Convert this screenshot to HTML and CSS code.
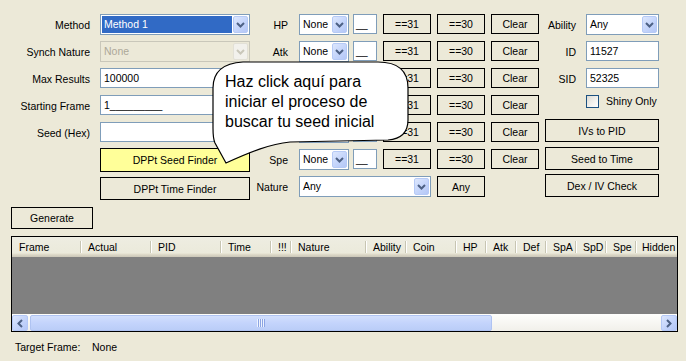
FILE: index.html
```html
<!DOCTYPE html>
<html lang="es">
<head>
<meta charset="utf-8">
<title>RNG Reporter</title>
<link rel="stylesheet" href="styles.css">
</head>
<body>
<div class="top">
  <div class="col col-left">
    <div class="row"><span class="lbl">Method</span>
      <div class="combo w150 selected"><span class="val"><span class="hl">Method 1</span></span><span class="arrow"><svg width="9" height="6" viewBox="0 0 9 6"><path d="M1 1 L4.5 4.5 L8 1"/></svg></span></div></div>
    <div class="row"><span class="lbl">Synch Nature</span>
      <div class="combo w150 disabled"><span class="val">None</span><span class="arrow"><svg width="9" height="6" viewBox="0 0 9 6"><path d="M1 1 L4.5 4.5 L8 1"/></svg></span></div></div>
    <div class="row"><span class="lbl">Max Results</span><div class="tb w150">100000</div></div>
    <div class="row"><span class="lbl">Starting Frame</span><div class="tb w150">1_________</div></div>
    <div class="row"><span class="lbl">Seed (Hex)</span><div class="tb w150"></div></div>
    <button class="btn lbtn yellow">DPPt Seed Finder</button>
    <button class="btn lbtn second">DPPt Time Finder</button>
  </div>

  <div class="col col-mid">
    <div class="row"><span class="lbl">HP</span>
      <div class="combo sm"><span class="val">None</span><span class="arrow"><svg width="9" height="6" viewBox="0 0 9 6"><path d="M1 1 L4.5 4.5 L8 1"/></svg></span></div>
      <div class="tb xs">__</div>
      <button class="btn iv">==31</button><button class="btn iv">==30</button><button class="btn iv">Clear</button></div>
    <div class="row"><span class="lbl">Atk</span>
      <div class="combo sm"><span class="val">None</span><span class="arrow"><svg width="9" height="6" viewBox="0 0 9 6"><path d="M1 1 L4.5 4.5 L8 1"/></svg></span></div>
      <div class="tb xs">__</div>
      <button class="btn iv">==31</button><button class="btn iv">==30</button><button class="btn iv">Clear</button></div>
    <div class="row"><span class="lbl">Def</span>
      <div class="combo sm"><span class="val">None</span><span class="arrow"><svg width="9" height="6" viewBox="0 0 9 6"><path d="M1 1 L4.5 4.5 L8 1"/></svg></span></div>
      <div class="tb xs">__</div>
      <button class="btn iv">==31</button><button class="btn iv">==30</button><button class="btn iv">Clear</button></div>
    <div class="row"><span class="lbl">SpA</span>
      <div class="combo sm"><span class="val">None</span><span class="arrow"><svg width="9" height="6" viewBox="0 0 9 6"><path d="M1 1 L4.5 4.5 L8 1"/></svg></span></div>
      <div class="tb xs">__</div>
      <button class="btn iv">==31</button><button class="btn iv">==30</button><button class="btn iv">Clear</button></div>
    <div class="row"><span class="lbl">SpD</span>
      <div class="combo sm"><span class="val">None</span><span class="arrow"><svg width="9" height="6" viewBox="0 0 9 6"><path d="M1 1 L4.5 4.5 L8 1"/></svg></span></div>
      <div class="tb xs">__</div>
      <button class="btn iv">==31</button><button class="btn iv">==30</button><button class="btn iv">Clear</button></div>
    <div class="row"><span class="lbl">Spe</span>
      <div class="combo sm"><span class="val">None</span><span class="arrow"><svg width="9" height="6" viewBox="0 0 9 6"><path d="M1 1 L4.5 4.5 L8 1"/></svg></span></div>
      <div class="tb xs">__</div>
      <button class="btn iv">==31</button><button class="btn iv">==30</button><button class="btn iv">Clear</button></div>
    <div class="row"><span class="lbl">Nature</span>
      <div class="combo nat"><span class="val">Any</span><span class="arrow"><svg width="9" height="6" viewBox="0 0 9 6"><path d="M1 1 L4.5 4.5 L8 1"/></svg></span></div>
      <button class="btn iv any">Any</button></div>
  </div>

  <div class="col col-right">
    <div class="row"><span class="lbl">Ability</span>
      <div class="combo r"><span class="val">Any</span><span class="arrow"><svg width="9" height="6" viewBox="0 0 9 6"><path d="M1 1 L4.5 4.5 L8 1"/></svg></span></div></div>
    <div class="row"><span class="lbl">ID</span><div class="tb r">11527</div></div>
    <div class="row"><span class="lbl">SID</span><div class="tb r">52325</div></div>
    <div class="chkrow"><span class="chk"></span><span class="chklbl">Shiny Only</span></div>
    <button class="btn rb first">IVs to PID</button>
    <button class="btn rb mid">Seed to Time</button>
    <button class="btn rb last">Dex / IV Check</button>
  </div>
</div>

<button class="btn gen">Generate</button>

<div class="list">
  <div class="lv-head">
    <div class="hc c70">Frame</div>
    <div class="hc c70">Actual</div>
    <div class="hc c70">PID</div>
    <div class="hc c50">Time</div>
    <div class="hc c20">!!!</div>
    <div class="hc c75">Nature</div>
    <div class="hc c40">Ability</div>
    <div class="hc c50">Coin</div>
    <div class="hc c30">HP</div>
    <div class="hc c30">Atk</div>
    <div class="hc c30">Def</div>
    <div class="hc c30">SpA</div>
    <div class="hc c30">SpD</div>
    <div class="hc c30">Spe</div>
    <div class="hc last">Hidden</div>
  </div>
  <div class="lv-body"></div>
  <div class="hscroll">
    <div class="sbtn"><svg width="6" height="9" viewBox="0 0 6 9"><path d="M5 1 L1.5 4.5 L5 8"/></svg></div>
    <div class="thumb"><span class="grip"></span></div>
    <div class="track"></div>
    <div class="sbtn"><svg width="6" height="9" viewBox="0 0 6 9"><path d="M1 1 L4.5 4.5 L1 8"/></svg></div>
  </div>
</div>

<div class="status"><span>Target Frame:</span><span>None</span></div>

<div class="callout">
  <svg class="callout-shape" width="200" height="106" viewBox="0 0 200 106">
    <path d="M3 28 C3 10 15 3 33 2 L168 2 C188 2 198 10 198 28 L198 60 C198 73 190 79 178 80 L80 82 C60 84 40 92 16 103 L5 83 C3 79 3 74 3 68 Z"/>
  </svg>
  <div class="callout-text">Haz click aquí para<br>iniciar el proceso de<br>buscar tu seed inicial</div>
</div>
</body>
</html>
```

FILE: styles.css
```css
* { box-sizing: border-box; }
html, body { margin: 0; padding: 0; }
body {
  width: 686px;
  height: 361px;
  overflow: hidden;
  position: relative;
  background: #ECE9D8;
  font-family: "Liberation Sans", Arial, sans-serif;
  font-size: 10.5px;
  color: #000;
}

.top { display: flex; padding-top: 14px; height: 200px; }
.col { display: flex; flex-direction: column; }
.col-left { width: 250px; }
.col-mid { width: 289px; }
.col-right { width: 147px; }

.row { display: flex; align-items: center; height: 21px; margin-bottom: 6px; flex: none; }
.lbl { text-align: right; white-space: nowrap; line-height: 13px; padding-top: 1px; flex: none; }
.col-left .lbl { width: 90px; margin-right: 10px; }
.col-mid .lbl { width: 38px; margin-right: 11px; }
.col-right .lbl { width: 37px; margin-right: 10px; }

/* combobox */
.combo {
  height: 21px;
  border: 1px solid #7F9DB9;
  background: #fff;
  display: flex;
  align-items: center;
  flex: none;
}
.combo .val { flex: 1; padding-left: 3px; white-space: nowrap; overflow: hidden; line-height: 13px; }
.combo .arrow {
  width: 15px;
  height: 17px;
  margin: 1px;
  border: 1px solid #B6CAF6;
  border-radius: 2px;
  background: linear-gradient(135deg, #DDE7FD 0%, #C6D6FB 50%, #B4C7F6 100%);
  display: flex;
  align-items: center;
  justify-content: center;
  flex: none;
}
.combo .arrow svg path { fill: none; stroke: #4D6185; stroke-width: 2; }
.combo.selected .val {
  align-self: stretch;
  margin: 1px 0 1px 1px;
  padding-left: 0;
  display: flex;
  align-items: center;
}
.combo.selected .hl {
  flex: 1;
  align-self: stretch;
  display: flex;
  align-items: center;
  background: #316AC5;
  color: #fff;
  padding-left: 2px;
}
.combo.disabled { border-color: #C9C7BA; background: #ECE9D8; color: #ACA899; }
.combo.disabled .arrow { background: #F2F1EC; border-color: #E2E0D6; }
.combo.disabled .arrow svg path { stroke: #C9C7BA; }

.w150 { width: 150px; }
.combo.sm { width: 50px; }
.combo.nat { width: 132px; }
.combo.r, .tb.r { width: 73px; }

/* textbox */
.tb {
  height: 20px;
  border: 1px solid #7F9DB9;
  background: #fff;
  padding-left: 3px;
  line-height: 18px;
  align-self: flex-start;
  white-space: nowrap;
  overflow: hidden;
  flex: none;
}
.tb.xs { width: 24px; margin-left: 4px; padding-left: 2px; }

/* buttons */
.btn {
  display: flex;
  align-items: center;
  justify-content: center;
  border: 1px solid #000;
  background: #ECE9D8;
  font-family: inherit;
  font-size: inherit;
  color: #000;
  padding: 0;
  margin: 0;
  white-space: nowrap;
  flex: none;
}
.btn.iv { width: 48px; height: 20px; margin-left: 6px; align-self: flex-start; }
.btn.any { height: 21px; }
.lbtn { width: 150px; margin-left: 100px; }
.lbtn.yellow { background: #FFFF99; height: 24px; margin-top: -1px; }
.lbtn.second { height: 23px; margin-top: 5px; }

.chkrow { display: flex; align-items: center; height: 13px; margin-left: 47px; flex: none; }
.chk {
  width: 13px;
  height: 13px;
  border: 1px solid #1C5180;
  background: linear-gradient(135deg, #DCDBD5 0%, #F4F3EF 60%, #FFFFFF 100%);
  flex: none;
}
.chklbl { margin-left: 7px; white-space: nowrap; line-height: 13px; }

.rb { width: 114px; height: 23px; margin-left: 6px; }
.rb.first { margin-top: 11px; }
.rb.mid { margin-top: 5px; }
.rb.last { margin-top: 4px; }

.gen { width: 82px; height: 22px; margin: 7px 0 0 11px; }

/* list view */
.list {
  width: 667px;
  height: 96px;
  margin: 7px 0 0 11px;
  border: 1px solid #000;
  display: flex;
  flex-direction: column;
}
.lv-head {
  height: 20px;
  display: flex;
  flex: none;
  background: linear-gradient(to bottom, #EEEDE2 0%, #EBEADB 80%, #E2DECD 85%, #D6D2C2 92%, #CBC7B8 100%);
}
.hc {
  height: 20px;
  line-height: 20px;
  padding-left: 6px;
  white-space: nowrap;
  overflow: hidden;
  flex: none;
  background:
    linear-gradient(#C7C5B2, #C7C5B2) no-repeat right 1px center / 1px 12px,
    linear-gradient(#FFFFFF, #FFFFFF) no-repeat right 0 center / 1px 12px;
}
.hc.c70 { width: 70px; }
.hc.c50 { width: 50px; }
.hc.c20 { width: 20px; }
.hc.c75 { width: 75px; }
.hc.c40 { width: 40px; }
.hc.c30 { width: 30px; }
.hc.c70:first-child { padding-left: 7px; }
.hc.last { flex: 1; background: none; padding-left: 5px; }
.lv-body { flex: 1; background: #808080; }

.hscroll { height: 17px; display: flex; flex: none; background: linear-gradient(to bottom, #FEFEFC, #F1F0EA); }
.sbtn {
  width: 16px;
  height: 16px;
  margin-top: 1px;
  border: 1px solid #B4C8F6;
  border-radius: 2px;
  background: linear-gradient(135deg, #DCE6FD 0%, #C5D5FB 50%, #B3C6F6 100%);
  display: flex;
  align-items: center;
  justify-content: center;
  flex: none;
}
.sbtn svg path { fill: none; stroke: #4D6185; stroke-width: 2; }
.thumb {
  width: 462px;
  height: 16px;
  margin: 1px 0 0 2px;
  border: 1px solid #AFC3F2;
  border-radius: 2px;
  background: linear-gradient(to bottom, #D2DFFD 0%, #C4D4FC 50%, #BACDF8 100%);
  display: flex;
  align-items: center;
  justify-content: center;
  flex: none;
}
.grip {
  width: 8px;
  height: 8px;
  background: repeating-linear-gradient(to right, #EEF3FE 0 1px, #8CA5E4 1px 2px);
}
.track { flex: 1; }

.status { display: flex; margin: 9px 0 0 15px; line-height: 13px; }
.status span:first-child { width: 77px; }

/* callout bubble overlay */
.callout { position: absolute; left: 210px; top: 60px; width: 200px; height: 106px; }
.callout-shape { position: absolute; left: 0; top: 0; }
.callout-shape path { fill: #fff; stroke: #000; stroke-width: 1.2; }
.callout-text {
  position: relative;
  width: max-content;
  margin: 12px 0 0 15px;
  font-size: 16px;
  line-height: 20px;
  white-space: nowrap;
}
```
